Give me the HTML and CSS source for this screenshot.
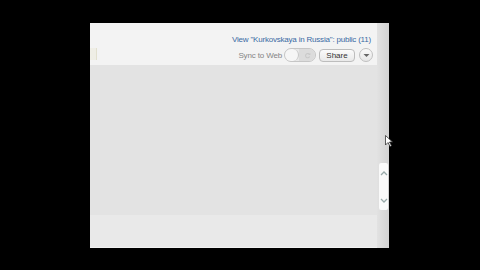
FILE: index.html
```html
<!DOCTYPE html>
<html lang="en">
<head>
    <meta charset="UTF-8">
    <title>Album</title>
    <link rel="stylesheet" href="styles.css">
</head>
<body>
    <div class="window">
        <div class="panel">
            <div class="header">
                <div class="tab-mark"></div>
                <div class="header-right">
                    <a class="view-link" href="#">View "Kurkovskaya in Russia": public (11)</a>
                    <div class="controls">
                        <span class="sync-label">Sync to Web</span>
                        <span class="toggle">
                            <span class="toggle-off"></span>
                            <span class="toggle-on">
                                <svg width="7" height="7" viewBox="0 0 10 10"><path d="M8 4A3 3 0 1 0 8 6.5" fill="none" stroke="#c8c8c8" stroke-width="1.5"/><path d="M6.5 3.5L9 4.2 9 1.5z" fill="#c8c8c8"/></svg>
                            </span>
                        </span>
                        <button class="share-btn">Share</button>
                        <span class="menu-btn">
                            <svg width="7" height="5" viewBox="0 0 7 5"><path d="M0.5 1L3.5 4 6.5 1z" fill="#666"/></svg>
                        </span>
                    </div>
                </div>
            </div>
            <div class="content"></div>
            <div class="footer"></div>
        </div>
        <div class="scrollbar">
            <div class="scroll-box">
                <svg width="8" height="6" viewBox="0 0 8 6"><path d="M1 5L4 2 7 5" fill="none" stroke="#9aa" stroke-width="1.3"/></svg>
                <svg width="8" height="6" viewBox="0 0 8 6"><path d="M1 1L4 4 7 1" fill="none" stroke="#9aa" stroke-width="1.3"/></svg>
            </div>
        </div>
        <svg class="cursor" width="8" height="12" viewBox="0 0 8 12"><path d="M0.5 0.5L0.5 10 3 7.5 5 11.5 6.5 10.8 4.5 7 7.5 7z" fill="#fff" stroke="#333" stroke-width="0.8"/></svg>
    </div>
</body>
</html>
```

FILE: styles.css
```css
/* Grundlayout */
body {
    margin: 0;
    background-color: #000;
    font-family: "Liberation Sans", Arial, sans-serif;
    width: 480px;
    height: 270px;
    overflow: hidden;
}

.window {
    position: relative;
    display: flex;
    margin: 23px 0 0 90px;
    width: 300px;
    height: 225px;
}

/* Inhalt links */
.panel {
    width: 287px;
    display: flex;
    flex-direction: column;
    background-color: #f2f2f2;
}

.header {
    height: 42px;
    display: flex;
    justify-content: space-between;
    background-color: #f3f3f3;
}

.tab-mark {
    width: 6px;
    height: 12px;
    margin-top: 25px;
    background-color: #efeee6;
    border-right: 1px solid #e2e0cf;
}

.header-right {
    display: flex;
    flex-direction: column;
    align-items: flex-end;
    padding: 11px 4px 0 0;
}

.view-link {
    font-size: 8px;
    letter-spacing: -0.2px;
    color: #3a6aa3;
    text-decoration: none;
    line-height: 11px;
    margin-right: 2px;
}

.controls {
    display: flex;
    align-items: center;
    margin-top: 3px;
    height: 14px;
}

.sync-label {
    font-size: 8px;
    letter-spacing: -0.15px;
    color: #858585;
    margin-right: 2px;
}

.toggle {
    display: flex;
    width: 30px;
    height: 12px;
    border: 1px solid #c6c6c6;
    border-radius: 7px;
    overflow: hidden;
    background-color: #e8e8e8;
}

.toggle-off {
    width: 13px;
    background-color: #f6f6f6;
    border-right: 1px solid #c6c6c6;
    border-radius: 6px;
}

.toggle-on {
    flex: 1;
    display: flex;
    align-items: center;
    justify-content: center;
    background-color: #dcdcdc;
}

.share-btn {
    margin-left: 3px;
    height: 13px;
    width: 36px;
    padding: 0;
    font-family: inherit;
    font-size: 8px;
    color: #333;
    background: linear-gradient(#fbfbfb, #e9e9e9);
    border: 1px solid #bdbdbd;
    border-radius: 4px;
}

.menu-btn {
    margin-left: 4px;
    width: 12px;
    height: 12px;
    display: flex;
    align-items: center;
    justify-content: center;
    border: 1px solid #c0c0c0;
    border-radius: 50%;
    background: linear-gradient(#fafafa, #e6e6e6);
}

.content {
    flex: 1;
    background-color: #e3e3e3;
}

.footer {
    height: 32px;
    background-color: #e9e9e9;
    border-bottom: 1px solid #f2f2f2;
}

/* Scrollleiste rechts */
.scrollbar {
    width: 12px;
    background: linear-gradient(90deg, #e2e2e2, #d2d2d2);
    display: flex;
    flex-direction: column;
    padding-top: 140px;
}

.scroll-box {
    margin-left: 2px;
    width: 9px;
    height: 47px;
    background-color: #fafafa;
    border-radius: 2px;
    display: flex;
    flex-direction: column;
    justify-content: space-between;
    align-items: center;
    padding: 7px 0 6px;
    box-sizing: border-box;
}

.cursor {
    position: absolute;
    left: 295px;
    top: 112px;
}
```
